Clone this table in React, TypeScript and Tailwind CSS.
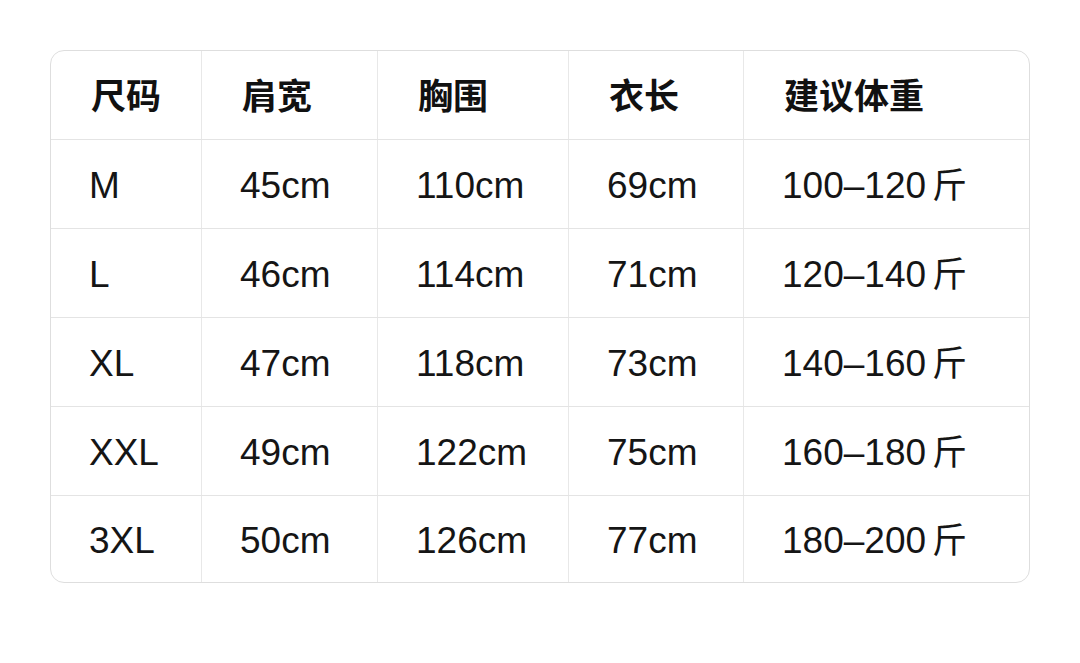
const headers = ["尺码", "肩宽", "胸围", "衣长", "建议体重"];

const rows = [
  ["M", "45cm", "110cm", "69cm", "100–120"],
  ["L", "46cm", "114cm", "71cm", "120–140"],
  ["XL", "47cm", "118cm", "73cm", "140–160"],
  ["XXL", "49cm", "122cm", "75cm", "160–180"],
  ["3XL", "50cm", "126cm", "77cm", "180–200"],
];

const font = { fontFamily: '"Liberation Sans", "Noto Sans CJK SC", sans-serif' };

const App = () => {
  return (
    <div className="w-[1080px] h-[663px] bg-white overflow-hidden pt-[50px] pl-[50px]" style={font}>
      <div className="w-[980px] border border-[#dedede] rounded-[14px] overflow-hidden text-[#151515]">
        {/* Header */}
        <div className="grid grid-cols-[151px_176px_191px_175px_1fr] h-[89px] border-b border-[#e4e4e4]">
          {headers.map((h, i) => (
            <div
              key={h}
              className={`flex items-center pl-[40px] pt-[5px] text-[35px] font-semibold text-[#111] ${i < 4 ? "border-r border-[#e8e8e8]" : ""}`}
            >
              {h}
            </div>
          ))}
        </div>

        {/* Body */}
        {rows.map((row, r) => (
          <div
            key={row[0]}
            className={`grid grid-cols-[151px_176px_191px_175px_1fr] ${r < rows.length - 1 ? "h-[89px] border-b border-[#e4e4e4]" : "h-[86px]"}`}
          >
            {row.map((cell, i) => (
              <div
                key={i}
                className={`flex items-center pl-[38px] pt-[4px] text-[37px] ${i < 4 ? "border-r border-[#e8e8e8]" : ""}`}
              >
                {cell}
                {i === 4 && <span className="ml-[6px] text-[35px]">斤</span>}
              </div>
            ))}
          </div>
        ))}
      </div>
    </div>
  );
};

export default App;
